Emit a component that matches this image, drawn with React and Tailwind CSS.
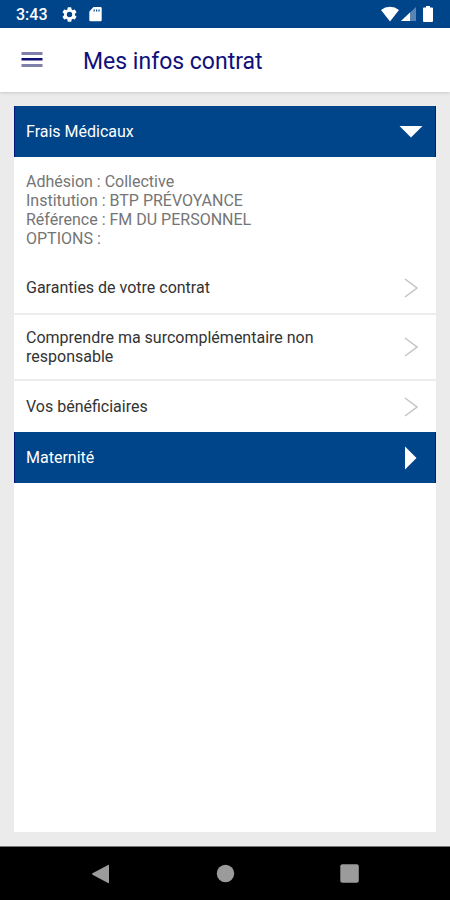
import { useState } from 'react';

const DETAILS = [
  'Adhésion : Collective',
  'Institution : BTP PRÉVOYANCE',
  'Référence : FM DU PERSONNEL',
  'OPTIONS :',
];

const LINKS = [
  { label: 'Garanties de votre contrat', href: '#garanties' },
  { label: 'Comprendre ma surcomplémentaire non responsable', href: '#surcomplementaire' },
  { label: 'Vos bénéficiaires', href: '#beneficiaires' },
];

function StatusBar() {
  return (
    <div className="flex h-7 items-center bg-[#00448a] px-4 text-white">
      <span className="pt-px text-base font-medium">3:43</span>
      <svg className="ml-[14px] size-[15px]" viewBox="2 2 20 20" fill="currentColor" aria-hidden="true">
        <path d="M19.14 12.94c.04-.3.06-.61.06-.94 0-.32-.02-.64-.07-.94l2.03-1.58a.49.49 0 0 0 .12-.61l-1.92-3.32a.49.49 0 0 0-.59-.22l-2.39.96a7 7 0 0 0-1.62-.94l-.36-2.54a.48.48 0 0 0-.48-.41h-3.84a.47.47 0 0 0-.47.41l-.36 2.54c-.59.24-1.13.57-1.62.94l-2.39-.96a.48.48 0 0 0-.59.22L2.74 8.87a.48.48 0 0 0 .12.61l2.03 1.58c-.05.3-.09.63-.09.94s.02.64.07.94l-2.03 1.58a.49.49 0 0 0-.12.61l1.92 3.32c.12.22.37.29.59.22l2.39-.96c.5.38 1.03.7 1.62.94l.36 2.54c.05.24.24.41.48.41h3.84c.24 0 .44-.17.47-.41l.36-2.54a7 7 0 0 0 1.62-.94l2.39.96c.22.08.47 0 .59-.22l1.92-3.32a.47.47 0 0 0-.12-.61zM12 15.6a3.6 3.6 0 1 1 0-7.2 3.6 3.6 0 0 1 0 7.2z" />
      </svg>
      <svg className="ml-3 h-4 w-[13px]" viewBox="0 0 13 16" fill="currentColor" aria-hidden="true">
        <path fillRule="evenodd" d="M4.500 1H11.500q1.200 0 1.200 1.200V14q0 1.200-1.200 1.200H1.500Q.3 15.200.3 14V5.500zM4.600 3.500v2h1.200v-2zM7 3.500v2h1.200v-2zM9.400 3.500v2h1.200v-2z" />
      </svg>
      <div className="ml-auto flex items-center">
        <svg className="h-4 w-5" viewBox="0 0 20 16" fill="currentColor" aria-hidden="true">
          <path d="M10 15.500 1 4Q5 .8 10 .8T19 4z" />
        </svg>
        <svg className="h-4 w-4" viewBox="0 0 16 16" fill="currentColor" aria-hidden="true">
          <path d="M1 15 16 1v14z" opacity="0.35" />
          <path d="M1 15 10 6.500V15z" />
        </svg>
        <svg className="ml-[6px] h-4 w-3" viewBox="0 0 12 16" fill="currentColor" aria-hidden="true">
          <path d="M4 0h4v1.500h2q1 0 1 1V15q0 1-1 1H2q-1 0-1-1V2.500q0-1 1-1h2z" />
        </svg>
      </div>
    </div>
  );
}

function TopBar() {
  return (
    <header className="relative flex h-16 items-center bg-white pl-5 shadow-[0_1px_3px_rgba(0,0,0,0.15)]">
      <button type="button" aria-label="Menu" className="text-[#10107a]">
        <svg className="size-6" viewBox="0 0 24 24" aria-hidden="true">
          <path d="M1.500 4h21v3h-21zM1.500 16h21v3h-21z" fill="#8080ac" />
          <path d="M1.500 10h21v2.500h-21z" fill="currentColor" />
        </svg>
      </button>
      <h1 className="ml-[39px] pt-1 text-[23px] leading-7 text-[#10107a]">Mes infos contrat</h1>
    </header>
  );
}

function SectionHeader({ title, open, onToggle }) {
  return (
    <h2>
      <button
        type="button"
        onClick={onToggle}
        aria-expanded={open}
        className="flex h-[51px] w-full items-center justify-between border-x border-[#00187c] bg-[#00448a] pl-[11px] pr-3 text-left text-white"
      >
        {title}
        <svg className="size-6" viewBox="0 0 24 24" fill="currentColor" aria-hidden="true">
          {open ? <path d="M.5 6h23L12 17.500z" /> : <path d="M6 .5v23L17.500 12z" />}
        </svg>
      </button>
    </h2>
  );
}

function LinkRow({ label, href }) {
  return (
    <li className="border-b-2 border-[#ececec] last:border-b-0">
      <a href={href} className="flex min-h-[51px] items-center justify-between py-[13px] pl-3 pr-[18px] text-[#333]">
        <span className="max-w-80">{label}</span>
        <svg className="h-5 w-[14px] shrink-0 text-[#c4c4c4]" viewBox="0 0 14 20" fill="none" stroke="currentColor" strokeWidth="1.5" aria-hidden="true">
          <path d="M1 1l12 9-12 9" />
        </svg>
      </a>
    </li>
  );
}

function NavBar() {
  return (
    <nav className="flex h-[54px] items-center justify-around border-t border-[#777] bg-black px-[38px] text-[#9b9b9b]">
      <button type="button" aria-label="Retour">
        <svg className="size-5" viewBox="0 0 20 20" fill="currentColor" aria-hidden="true">
          <path d="M19 1.500v17q0 1-1 .5L2.500 10.700q-1-.7 0-1.400L18 1q1-.5 1 .5z" />
        </svg>
      </button>
      <button type="button" aria-label="Accueil">
        <svg className="size-5" viewBox="0 0 20 20" fill="currentColor" aria-hidden="true">
          <circle cx="10.500" cy="9.500" r="8.700" />
        </svg>
      </button>
      <button type="button" aria-label="Applications récentes">
        <svg className="size-5" viewBox="0 0 20 20" fill="currentColor" aria-hidden="true">
          <rect x="0.300" y="0.300" width="18.500" height="18.500" rx="2" />
        </svg>
      </button>
    </nav>
  );
}

export default function App() {
  const [open, setOpen] = useState('frais');
  const toggle = (key) => setOpen(open === key ? null : key);

  return (
    <div className="flex min-h-screen flex-col bg-[#ebebeb] font-['Roboto',sans-serif] text-base leading-[19px]">
      <StatusBar />
      <TopBar />

      <main className="flex flex-1 flex-col p-[14px]">
        <div className="flex-1 bg-white">
          <SectionHeader title="Frais Médicaux" open={open === 'frais'} onToggle={() => toggle('frais')} />
          {open === 'frais' && (
            <>
              <div className="px-3 pb-[14px] pt-[15px] text-[#757575]">
                {DETAILS.map((line) => (
                  <p key={line}>{line}</p>
                ))}
              </div>
              <ul>
                {LINKS.map((link) => (
                  <LinkRow key={link.href} {...link} />
                ))}
              </ul>
            </>
          )}
          <SectionHeader title="Maternité" open={open === 'maternite'} onToggle={() => toggle('maternite')} />
        </div>
      </main>

      <NavBar />
    </div>
  );
}
